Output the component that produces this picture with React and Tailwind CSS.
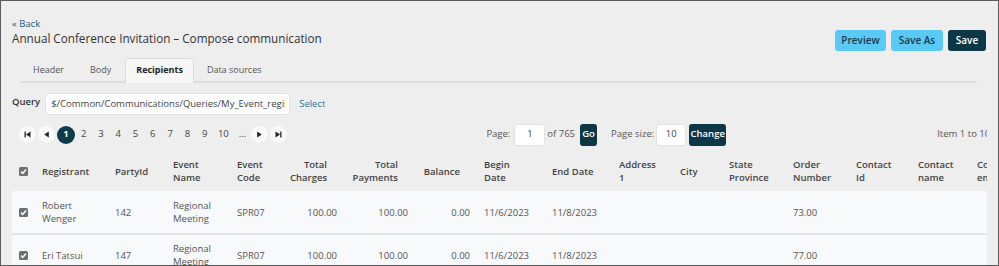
import React from "react";

const columns = [
  { key: "registrant", label: ["Registrant"], w: "w-[73px]" },
  { key: "partyId", label: ["PartyId"], w: "w-[58px]" },
  { key: "eventName", label: ["Event", "Name"], w: "w-[64px]" },
  { key: "eventCode", label: ["Event", "Code"], w: "w-[53px]" },
  { key: "charges", label: ["Total", "Charges"], w: "w-[61px]", num: true },
  { key: "payments", label: ["Total", "Payments"], w: "w-[71px]", num: true },
  { key: "balance", label: ["Balance"], w: "w-[62px]", num: true },
  { key: "begin", label: ["Begin", "Date"], w: "w-[68px]" },
  { key: "end", label: ["End Date"], w: "w-[67px]" },
  { key: "address", label: ["Address", "1"], w: "w-[61px]" },
  { key: "city", label: ["City"], w: "w-[49px]" },
  { key: "state", label: ["State", "Province"], w: "w-[64px]" },
  { key: "order", label: ["Order", "Number"], w: "w-[63px]" },
  { key: "contactId", label: ["Contact", "Id"], w: "w-[62px]" },
  { key: "contactName", label: ["Contact", "name"], w: "w-[59px]" },
  { key: "contactEmail", label: ["Contact", "email"], w: "w-[70px]" },
];

const rows = [
  {
    registrant: ["Robert", "Wenger"],
    partyId: "142",
    eventName: ["Regional", "Meeting"],
    eventCode: "SPR07",
    charges: "100.00",
    payments: "100.00",
    balance: "0.00",
    begin: "11/6/2023",
    end: "11/8/2023",
    order: "73.00",
  },
  {
    registrant: ["Eri Tatsui"],
    partyId: "147",
    eventName: ["Regional", "Meeting"],
    eventCode: "SPR07",
    charges: "100.00",
    payments: "100.00",
    balance: "0.00",
    begin: "11/6/2023",
    end: "11/8/2023",
    order: "77.00",
  },
];

const Check = () => (
  <svg width="9" height="9" viewBox="0 0 9 9">
    <rect width="9" height="9" rx="1.5" fill="#6e6e6e" />
    <path d="M2 4.6 L3.8 6.3 L7 2.6" stroke="#fff" strokeWidth="1.5" fill="none" />
  </svg>
);

const PagerIcon = ({ type }) => (
  <span className="flex h-[17px] w-[17px] items-center justify-center rounded-full bg-[#f9f9f9]">
    <svg width="7" height="7" viewBox="0 0 7 7" fill="#222">
      {type === "first" && (
        <>
          <rect x="0.5" y="0.5" width="1.3" height="6" />
          <path d="M6.5 0.5 L2 3.5 L6.5 6.5 Z" />
        </>
      )}
      {type === "prev" && <path d="M5.8 0.5 L1.2 3.5 L5.8 6.5 Z" />}
      {type === "next" && <path d="M1.2 0.5 L5.8 3.5 L1.2 6.5 Z" />}
      {type === "last" && (
        <>
          <path d="M0.5 0.5 L5 3.5 L0.5 6.5 Z" />
          <rect x="5.2" y="0.5" width="1.3" height="6" />
        </>
      )}
    </svg>
  </span>
);

const Cell = ({ value, num }) => {
  const lines = Array.isArray(value) ? value : value ? [value] : [];
  return (
    <div className={num ? "text-right" : ""}>
      {lines.map((l) => (
        <div key={l}>{l}</div>
      ))}
    </div>
  );
};

export default function App() {
  return (
    <div className="h-[266px] w-[999px] overflow-hidden border border-[#5b5b5b] bg-[#eeeeee] pl-[11px] pr-[12px] font-['Open_Sans',sans-serif] text-[#333]">
      {/* title + actions */}
      <div className="flex items-start justify-between">
        <div className="mt-[16px]">
          <a className="block text-[9.5px] leading-[13px] text-[#1d5b7c]">« Back</a>
          <h1 className="text-[11.7px] leading-[17px] text-[#333]">
            Annual Conference Invitation – Compose communication
          </h1>
        </div>
        <div className="mt-[29px] flex gap-[5px] text-[10px] font-semibold">
          <button className="h-[21px] w-[51px] rounded-[3px] bg-[#5bc9f5] text-[#173b4c]">Preview</button>
          <button className="h-[21px] w-[52px] rounded-[3px] bg-[#5bc9f5] text-[#173b4c]">Save As</button>
          <button className="h-[21px] w-[38px] rounded-[3px] bg-[#0b3747] text-white">Save</button>
        </div>
      </div>

      {/* tabs */}
      <div className="ml-[8px] mr-[9px] mt-[7px] flex border-b-2 border-[#dedede] text-[9px] text-[#555]">
        <div className="flex h-[23px] items-center px-[13px]">Header</div>
        <div className="flex h-[23px] items-center px-[13px]">Body</div>
        <div className="-mb-[2px] ml-[1px] flex h-[25px] items-center rounded-t-[3px] border border-b-0 border-[#dcdcdc] bg-[#f7f7f7] px-[10px] pb-[2px] font-bold text-[#222]">
          Recipients
        </div>
        <div className="flex h-[23px] items-center px-[13px]">Data sources</div>
      </div>

      {/* query */}
      <div className="mt-[10px] flex items-start text-[9.5px]">
        <span className="mt-[2px] font-semibold text-[#333]">Query</span>
        <div className="ml-[5px] h-[22px] w-[245px] overflow-hidden rounded-[3px] border border-[#e2e2e2] bg-white px-[5px]">
          <div className="w-[234px] overflow-hidden whitespace-nowrap leading-[20px] text-[#444]">
            $/Common/Communications/Queries/My_Event_regis
          </div>
        </div>
        <a className="ml-[9px] mt-[4px] text-[#2776a6]">Select</a>
      </div>

      {/* grid */}
      <div className="w-[975px] overflow-hidden">
        <div className="mt-[8px] flex h-[23px] w-[1100px] items-center text-[9.5px] text-[#444]">
          <div className="ml-[7px] flex items-center gap-[2px]">
            <PagerIcon type="first" />
            <PagerIcon type="prev" />
          </div>
          <span className="ml-[2px] flex h-[18px] w-[18px] items-center justify-center rounded-full bg-[#0d3b4b] font-bold text-white">
            1
          </span>
          {["2", "3", "4", "5", "6", "7", "8", "9"].map((n) => (
            <span key={n} className="w-[17.3px] text-center">
              {n}
            </span>
          ))}
          <span className="w-[20px] text-center">10</span>
          <span className="w-[18px] text-center">…</span>
          <div className="flex items-center gap-[2px]">
            <PagerIcon type="next" />
            <PagerIcon type="last" />
          </div>

          <span className="ml-[199px] text-[#555]">Page:</span>
          <span className="ml-[4px] flex h-[22px] w-[31px] items-center justify-center rounded-[3px] border border-[#e2e2e2] bg-white text-[#444]">
            1
          </span>
          <span className="ml-[2px] text-[#555]">of 765</span>
          <span className="ml-[5px] flex h-[22px] w-[17px] items-center justify-center rounded-[3px] bg-[#0b3747] font-semibold text-white">
            Go
          </span>
          <span className="ml-[14px] text-[#555]">Page size:</span>
          <span className="ml-[2px] flex h-[22px] w-[30px] items-center justify-center rounded-[3px] border border-[#e2e2e2] bg-white text-[#444]">
            10
          </span>
          <span className="ml-[3px] flex h-[22px] w-[37px] items-center justify-center rounded-[3px] bg-[#0b3747] font-semibold text-white">
            Change
          </span>
          <span className="ml-[211px] whitespace-nowrap text-[#555]">Item 1 to 10 of 7650</span>
        </div>

        <div className="mt-[5px] w-[1100px] text-[9.5px] leading-[13px]">
          <div className="flex h-[40px] items-center font-semibold text-[#444]">
            <div className="w-[23px] shrink-0 pl-[7px] pt-[1px]">
              <Check />
            </div>
            {columns.map((c) => (
              <div key={c.key} className={`${c.w} shrink-0 px-[7px] ${c.num ? "pr-[17px] text-right" : ""}`}>
                {c.label.map((l) => (
                  <div key={l}>{l}</div>
                ))}
              </div>
            ))}
          </div>
          {rows.map((r, i) => (
            <div
              key={i}
              className={`flex h-[42px] items-center bg-[#f8f9fa] text-[#555] ${i > 0 ? "border-t-2 border-[#e4e4e4]" : ""}`}
            >
              <div className="w-[23px] shrink-0 pl-[7px] pt-[1px]">
                <Check />
              </div>
              {columns.map((c) => (
                <div key={c.key} className={`${c.w} shrink-0 px-[7px]`}>
                  <Cell value={r[c.key]} num={c.num} />
                </div>
              ))}
            </div>
          ))}
        </div>
      </div>
    </div>
  );
}
